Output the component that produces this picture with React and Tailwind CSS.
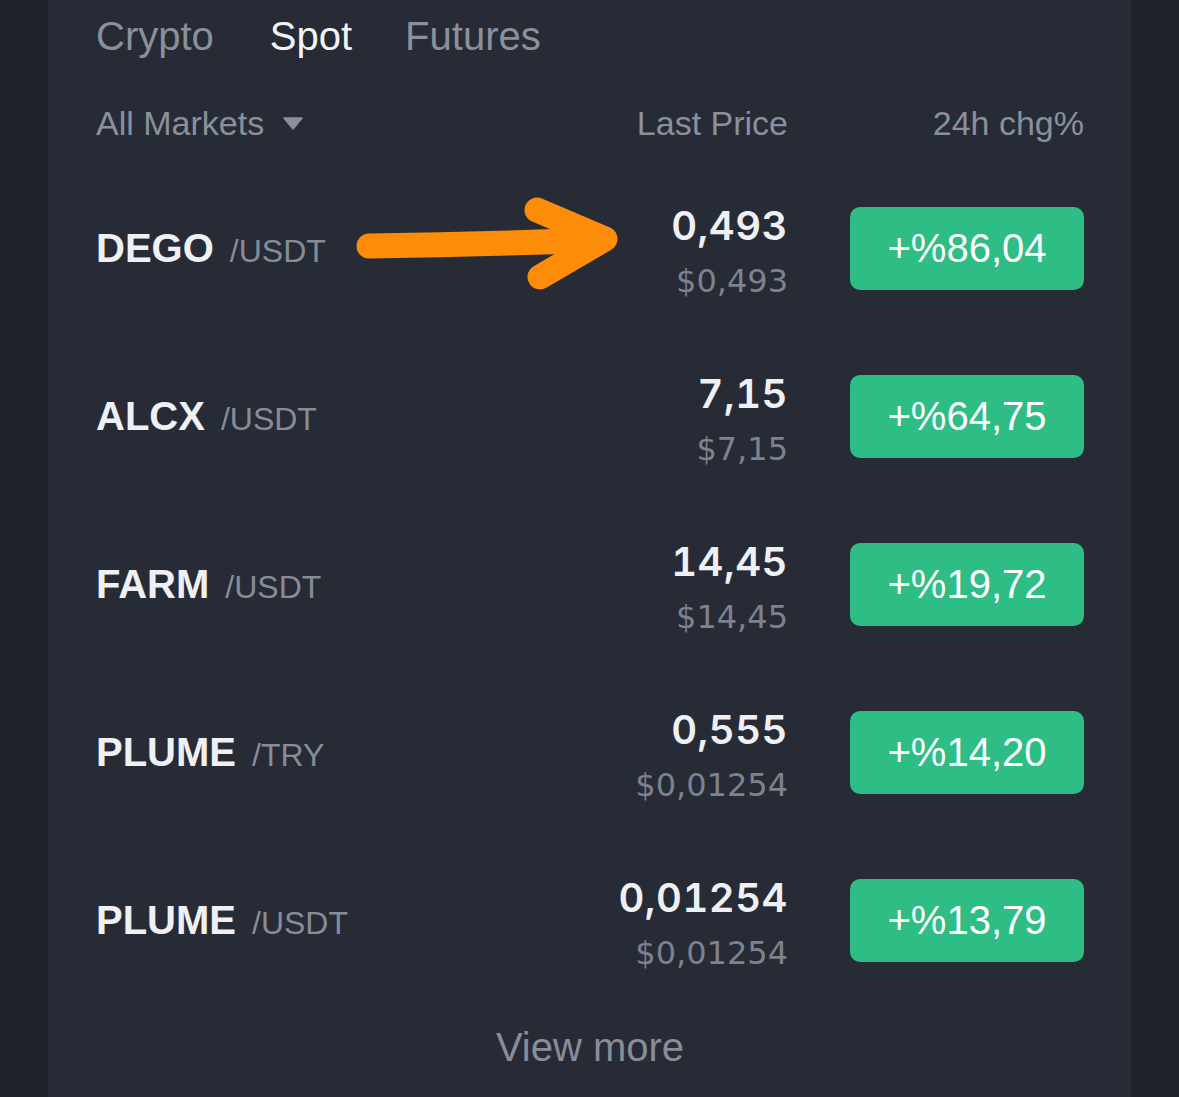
const rows = [
  { base: "DEGO", quote: "/USDT", price: "0,493", usd: "$0,493", chg: "+%86,04" },
  { base: "ALCX", quote: "/USDT", price: "7,15", usd: "$7,15", chg: "+%64,75" },
  { base: "FARM", quote: "/USDT", price: "14,45", usd: "$14,45", chg: "+%19,72" },
  { base: "PLUME", quote: "/TRY", price: "0,555", usd: "$0,01254", chg: "+%14,20" },
  { base: "PLUME", quote: "/USDT", price: "0,01254", usd: "$0,01254", chg: "+%13,79" },
];

const sans = "font-['Liberation_Sans',Arial,sans-serif]";
const num = "font-['DejaVu_Sans',sans-serif]";
const inter = "font-['Inter',sans-serif]";

const MarketRow = ({ row }) => (
  <div className="h-[168px] flex items-center">
    <div className={`flex-1 flex items-baseline ${sans}`}>
      <span className="text-[40px] leading-[40px] font-bold text-[#eef0f3]">{row.base}</span>
      <span className="ml-[16px] text-[32px] leading-[32px] text-[#878c98]">{row.quote}</span>
    </div>
    <div className="flex flex-col items-end pt-2">
      <span className={`text-[40px] leading-[38px] font-semibold tabular-nums tracking-[0.5px] text-[#eef0f3] ${inter}`}>
        {row.price}
      </span>
      <span className={`mt-[20px] text-[32px] leading-[32px] text-[#7d828e] ${num}`}>{row.usd}</span>
    </div>
    <div
      className={`ml-[62px] w-[234px] h-[83px] rounded-[10px] bg-[#2ebd85] flex items-center justify-center text-[40px] leading-[40px] text-white ${sans}`}
    >
      {row.chg}
    </div>
  </div>
);

export default function App() {
  return (
    <div className="relative w-[1179px] h-[1097px] bg-[#1f2229] pl-[48px] overflow-hidden">
      <div className="w-[1083px] h-[1097px] bg-[#262b36] pl-12 pr-[47px]">
        {/* tabs */}
        <div className={`h-[72px] flex items-center text-[40px] leading-[40px] ${sans}`}>
          <span className="text-[#8a909c]">Crypto</span>
          <span className="ml-[56px] text-[#f2f3f5]">Spot</span>
          <span className="ml-[53px] text-[#8a909c]">Futures</span>
        </div>

        {/* column header */}
        <div className={`h-[92px] pt-[34px] flex items-start text-[34px] leading-[34px] text-[#8a909c] ${sans}`}>
          <div className="flex-1 flex items-center h-[34px]">
            <span>All Markets</span>
            <svg className="ml-[19px]" width="20" height="13" viewBox="0 0 20 13">
              <path d="M1 1 H19 L10 12 Z" fill="#8a909c" stroke="#8a909c" strokeLinejoin="round" strokeWidth="1.5" />
            </svg>
          </div>
          <span>Last Price</span>
          <span className="ml-[62px] w-[234px] text-right">24h chg%</span>
        </div>

        {rows.map((row, i) => (
          <MarketRow key={i} row={row} />
        ))}

        <div className={`h-[86px] flex items-center justify-center text-[40px] leading-[40px] text-[#888d99] ${sans}`}>
          View more
        </div>
      </div>

      {/* annotation arrow */}
      <svg className="absolute left-[340px] top-[190px]" width="300" height="110" viewBox="0 0 300 110">
        <g fill="none" stroke="#fd8c08" strokeWidth="25" strokeLinecap="round" strokeLinejoin="round">
          <path d="M29 56 C100 55 180 53 258 50" />
          <path d="M197 20 L265 49 L200 87" />
        </g>
      </svg>
    </div>
  );
}
